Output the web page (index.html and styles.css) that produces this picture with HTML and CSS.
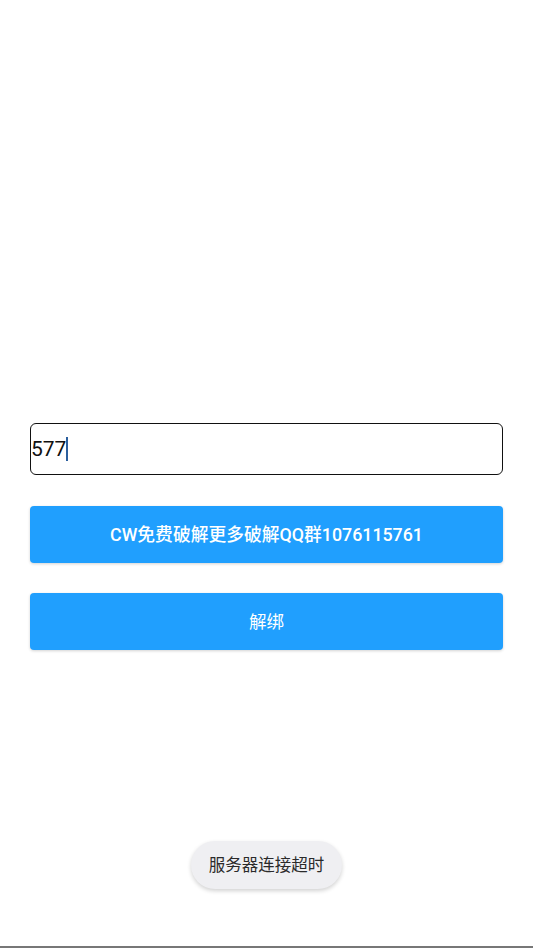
FILE: index.html
```html
<!DOCTYPE html>
<html lang="zh">

<head>
    <meta charset="UTF-8">
    <meta name="viewport" content="width=device-width, initial-scale=1.0">
    <title>解绑</title>
    <link rel="stylesheet" href="styles.css">
</head>

<body>
    <div class="screen">
        <main class="form">
            <div class="field">
                <span class="field-value">577</span><span class="caret"></span>
            </div>
            <button class="btn btn-bold">CW免费破解更多破解QQ群1076115761</button>
            <button class="btn">解绑</button>
        </main>

        <div class="toast">服务器连接超时</div>
    </div>
    <div class="nav-line"></div>
</body>

</html>
```

FILE: styles.css
```css
body {
    font-family: Roboto, "Noto Sans CJK SC", sans-serif;
    margin: 0;
    padding: 0;
    background-color: #fff;
}

.screen {
    height: 946px;
    display: flex;
    flex-direction: column;
    align-items: center;
}

.form {
    width: 473px;
    padding-top: 423px;
    display: flex;
    flex-direction: column;
    gap: 30px;
}

.field {
    height: 50px;
    border: 1px solid #111;
    border-radius: 6px;
    display: flex;
    align-items: center;
    margin-bottom: 1px;
}

.field-value {
    font-size: 21px;
    color: #111;
    line-height: 1;
}

.caret {
    display: inline-block;
    width: 2px;
    height: 24px;
    background-color: #2b5f9e;
    margin-left: 0;
}

.btn {
    height: 57px;
    padding: 0 0 3px;
    border: none;
    border-radius: 4px;
    background-color: #209ffe;
    color: white;
    font-family: Roboto, "Noto Sans CJK SC", sans-serif;
    font-size: 17.5px;
    box-shadow: 0 1px 3px rgba(0, 0, 0, 0.18);
}

.btn-bold {
    font-size: 17.8px;
    font-weight: 500;
}

.toast {
    margin-top: auto;
    margin-bottom: 57px;
    padding: 2px 18px 0;
    height: 46px;
    line-height: 46px;
    border-radius: 24px;
    background-color: #efeff2;
    color: #2a2a2a;
    font-size: 16.5px;
    box-shadow: 0 2px 4px rgba(0, 0, 0, 0.18);
}

.nav-line {
    height: 2px;
    background-color: #777;
}
```
